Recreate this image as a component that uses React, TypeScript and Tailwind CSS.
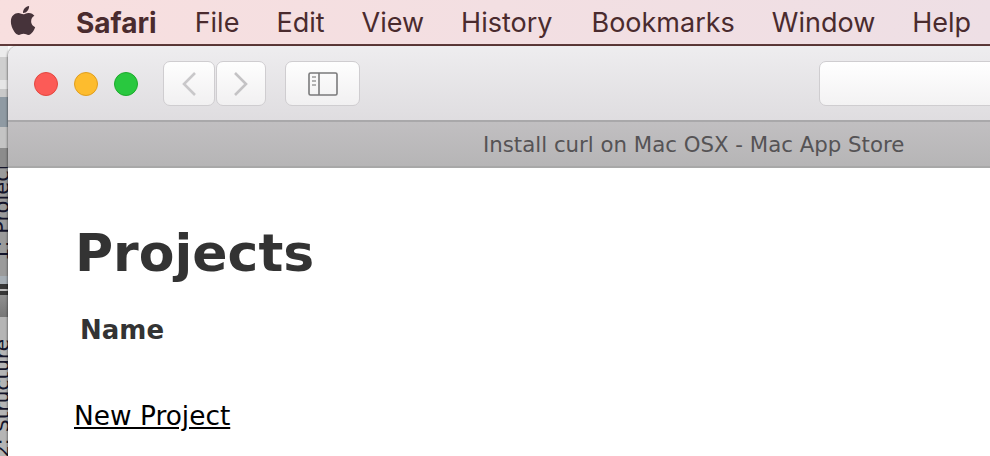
import React from "react";
import { FaApple } from "react-icons/fa";

const sans = "font-['Inter','Liberation_Sans',sans-serif]";
const verdana = "font-['DejaVu_Sans','Liberation_Sans',sans-serif]";

function Strip() {
  return (
    <div className="w-2 shrink-0 flex flex-col overflow-hidden bg-[#aaa]">
      <div className="h-[11px] bg-[#ececec]" />
      <div className="h-[23px] bg-[#cfcfcf]" />
      <div className="h-[9px] bg-[#e6e6e6]" />
      <div className="h-[8px] bg-[#c9c9c9]" />
      <div className="h-[30px] bg-[#8f9aa3]" />
      <div className="h-[21px] bg-[#c4c4c4]" />
      <div className="h-[19px] bg-[#8c8c8c]" />
      <div className="h-[109px] bg-[#9b9b9b] overflow-hidden flex justify-start items-end">
        <span className={`${verdana} [writing-mode:vertical-rl] rotate-180 text-[21px] leading-[16px] text-[#14142a] whitespace-nowrap shrink-0 -ml-[6px] pt-[15px]`}>1: Project</span>
      </div>
      <div className="h-[8px] bg-[#a6aeb5]" />
      <div className="h-[11px] bg-[#363636] flex items-center"><div className="h-[2px] w-full bg-[#bbb]" /></div>
      <div className="h-[22px] bg-gradient-to-b from-[#8f8f8f] to-[#777]" />
      <div className="flex-1 bg-[#b5b5b5] overflow-hidden flex justify-start items-end">
        <span className={`${verdana} [writing-mode:vertical-rl] rotate-180 text-[20px] leading-[16px] text-[#14142a] whitespace-nowrap shrink-0 -ml-[6px] -mb-[2px]`}>2: Structure</span>
      </div>
    </div>
  );
}

function ToolButton({ className, children }: { className: string; children: React.ReactNode }) {
  return (
    <div className={`h-[45px] rounded-[7px] border border-[#cfcdd0] bg-gradient-to-b from-[#fefefe] to-[#f1f0f1] flex items-center justify-center shrink-0 ${className}`}>
      {children}
    </div>
  );
}

export default function App() {
  const menu = ["File", "Edit", "View", "History", "Bookmarks", "Window", "Help"];
  return (
    <div className="w-[990px] h-[456px] overflow-hidden flex flex-col bg-white">
      <div className={`${sans} h-[46px] shrink-0 border-b-2 border-[#5f3a3a] bg-gradient-to-r from-[#f8dfdf] to-[#eedfe5] flex items-center pl-[10px] text-[#4a2b2e] text-[27px] whitespace-nowrap`}>
        <FaApple className="w-[30px] h-[33px] text-[#46333a] mr-[38px] -ml-[2px] -mt-[4px]" />
        <span className="font-bold text-[28px] mr-[38px] pt-[2px]">Safari</span>
        <div className="flex gap-[37px] pt-[2px]">
          {menu.map((m) => (
            <span key={m} className={m === "Bookmarks" ? "ml-[2px]" : undefined}>{m}</span>
          ))}
        </div>
      </div>
      <div className="flex-1 flex min-h-0">
        <Strip />
        <div className="flex-1 flex flex-col rounded-tl-[10px] overflow-hidden bg-white min-w-0 shadow-[-1px_0_2px_rgba(0,0,0,0.35)] z-10">
          <div className="h-[76px] shrink-0 border-b-2 border-[#a9a8aa] bg-gradient-to-b from-[#eeedef] to-[#dfdde0] flex items-center pl-[26px] pt-[1px]">
            <div className="flex gap-[16px] mr-[25px]">
              <div className="w-[24px] h-[24px] rounded-full bg-[#fc5b57] border border-[#e3473f]" />
              <div className="w-[24px] h-[24px] rounded-full bg-[#fdbc2e] border border-[#e09e1e]" />
              <div className="w-[24px] h-[24px] rounded-full bg-[#29c83f] border border-[#1daa2c]" />
            </div>
            <ToolButton className="w-[52px]">
              <svg width="16" height="26" viewBox="0 0 16 26" fill="none" stroke="#c9c8ca" strokeWidth="2.6">
                <path d="M14 2 3 13l11 11" />
              </svg>
            </ToolButton>
            <ToolButton className="w-[50px] ml-[1px]">
              <svg width="16" height="26" viewBox="0 0 16 26" fill="none" stroke="#c4c3c5" strokeWidth="2.6">
                <path d="M2 2l11 11L2 24" />
              </svg>
            </ToolButton>
            <ToolButton className="w-[75px] ml-[19px]">
              <svg width="30" height="24" viewBox="0 0 30 24" fill="none">
                <rect x="1" y="1" width="28" height="22" rx="1.5" stroke="#7a7a7b" strokeWidth="1.6" />
                <path d="M11 1v22" stroke="#7a7a7b" strokeWidth="1.6" />
                <path d="M4 5h4M4 9h4M4 13h4" stroke="#9a9a9b" strokeWidth="1.6" />
              </svg>
            </ToolButton>
            <ToolButton className="w-[300px] ml-[459px] from-[#ffffff] to-[#f3f2f3]">
              <span />
            </ToolButton>
          </div>
          <div className={`${verdana} h-[46px] shrink-0 border-b-2 border-[#a8a8a8] bg-gradient-to-b from-[#c1bfc1] to-[#b6b5b6] flex items-center text-[#555355] text-[21.3px] whitespace-nowrap pl-[475px] pt-[2px]`}>
            Install curl on Mac OSX - Mac App Store
          </div>
          <div className={`${verdana} flex-1 pl-[67px] pt-[50px] text-[#333]`}>
            <h1 className="text-[52px] leading-[70px] font-bold">Projects</h1>
            <div className="text-[26px] leading-[32px] font-bold pl-[5px] mt-[26px]">Name</div>
            <a className="block text-[26.4px] leading-[32px] text-black underline mt-[54px] w-max -ml-[1px]">New Project</a>
          </div>
        </div>
      </div>
    </div>
  );
}
